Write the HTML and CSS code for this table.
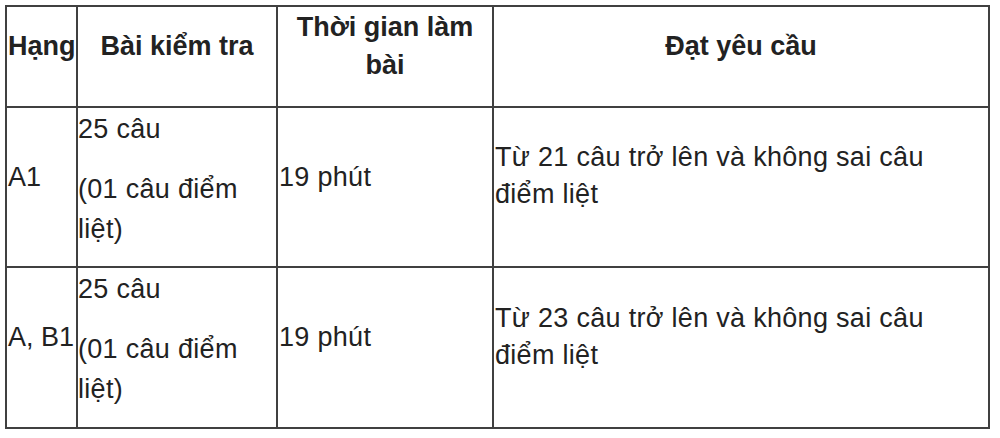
FILE: index.html
```html
<!DOCTYPE html>
<html lang="vi">
<head>
<meta charset="utf-8">
<title>Bảng</title>
<link rel="stylesheet" href="styles.css">
</head>
<body>
<table class="exam">
  <colgroup>
    <col class="c1">
    <col class="c2">
    <col class="c3">
    <col class="c4">
  </colgroup>
  <thead>
    <tr class="head">
      <th class="h-left">Hạng</th>
      <th>Bài kiểm tra</th>
      <th>Thời gian làm bài</th>
      <th>Đạt yêu cầu</th>
    </tr>
  </thead>
  <tbody>
    <tr class="row">
      <td class="rank">A1</td>
      <td class="test"><p>25 câu</p><p class="sub">(01 câu điểm liệt)</p></td>
      <td class="time">19 phút</td>
      <td class="req">Từ 21 câu trở lên và không sai câu điểm liệt</td>
    </tr>
    <tr class="row last">
      <td class="rank">A, B1</td>
      <td class="test"><p>25 câu</p><p class="sub">(01 câu điểm liệt)</p></td>
      <td class="time">19 phút</td>
      <td class="req">Từ 23 câu trở lên và không sai câu điểm liệt</td>
    </tr>
  </tbody>
</table>
</body>
</html>
```

FILE: styles.css
```css
html, body {
  margin: 0;
  padding: 0;
  background: #ffffff;
}

body {
  padding: 5px 0 0 5px;
  font-family: "Liberation Sans", Arial, Helvetica, sans-serif;
  color: #222222;
}

.exam {
  border-collapse: collapse;
  table-layout: fixed;
  width: 985px;
  font-size: 27px;
}

.c1 { width: 71px; }
.c2 { width: 200px; }
.c3 { width: 216px; }
.c4 { width: 496px; }

.exam th,
.exam td {
  border: 2px solid #404040;
  vertical-align: middle;
}

.exam th {
  font-weight: bold;
  text-align: center;
  line-height: 38px;
  padding: 0 0 22px 0;
}

.exam th.h-left {
  text-align: left;
  padding-left: 1px;
  white-space: nowrap;
}

.head { height: 101px; }
.row { height: 160px; }
.row.last { height: 161px; }

.exam td {
  line-height: 37px;
  letter-spacing: 0.3px;
  padding: 0 1px 20px 1px;
  text-align: left;
}

.exam td.rank {
  white-space: nowrap;
  letter-spacing: 0;
  padding-left: 1px;
  padding-right: 0;
}

.exam td.req {
  padding-bottom: 22px;
}

.exam td.test {
  padding-left: 0;
  padding-bottom: 17px;
  line-height: 40px;
}

.test p {
  margin: 0;
}

.test p.sub {
  margin-top: 20px;
}
```
